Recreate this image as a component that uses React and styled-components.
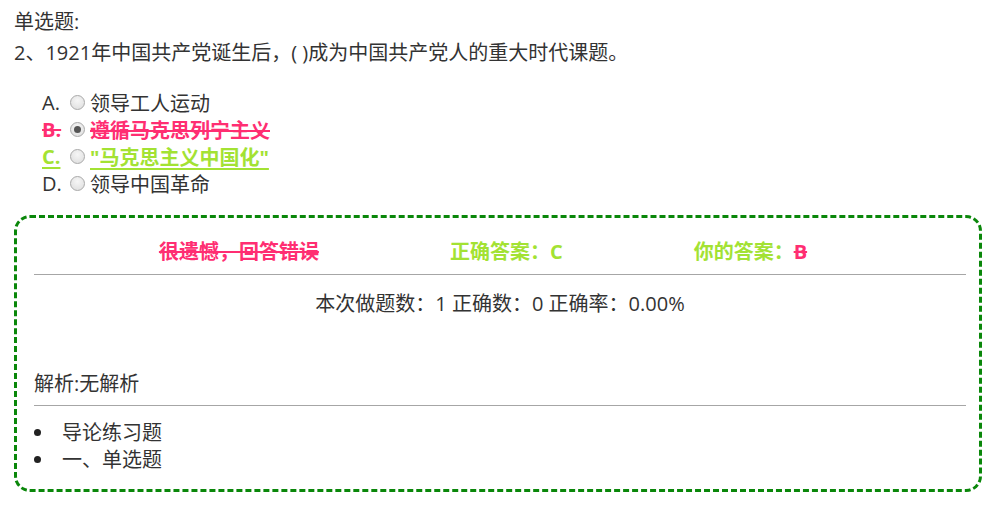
import styled, { createGlobalStyle } from "styled-components"

const GlobalStyle = createGlobalStyle`
  html, body {
    margin: 0;
    padding: 0;
    background: #fff;
  }
  body {
    font-family: "Open Sans", "Noto Sans CJK SC", sans-serif;
    font-size: 20px;
    color: #333;
  }
`

const Page = styled.div`
  padding: 8px 17px 0 14px;
`

const Line = styled.div`
  line-height: 27px;
  margin-top: ${(p) => p.$top || 0}px;
`

const Options = styled.div`
  margin: 23px 0 0 28px;
`

const Option = styled.div`
  display: flex;
  align-items: center;
  height: 27px;
  color: ${(p) => (p.$state === "wrong" ? "#ff2e72" : p.$state === "right" ? "#a3e233" : "#333")};
  font-weight: ${(p) => (p.$state ? 700 : 400)};
`

const Mark = styled.span`
  width: 21px;
  text-decoration: ${(p) => (p.$state === "wrong" ? "line-through" : p.$state === "right" ? "underline" : "none")};
  text-decoration-thickness: 2px;
  text-underline-offset: 3px;
  white-space: pre;
`

const Radio = styled.span`
  box-sizing: border-box;
  width: 15px;
  height: 15px;
  border-radius: 50%;
  border: 1px solid #a9a9a9;
  background: radial-gradient(circle at 50% 35%, #f6f6f6 0%, #dcdcdc 100%);
  margin: 0 5px 0 7px;
  display: flex;
  align-items: center;
  justify-content: center;
  &::after {
    content: "";
    width: 7px;
    height: 7px;
    border-radius: 50%;
    background: #555;
    display: ${(p) => (p.$checked ? "block" : "none")};
  }
`

const OptionText = styled.span`
  text-decoration: ${(p) => (p.$state === "wrong" ? "line-through" : p.$state === "right" ? "underline" : "none")};
  text-decoration-thickness: 2px;
  text-underline-offset: 3px;
`

const ResultBox = styled.div`
  margin-top: 18px;
  border: 3px dashed #0a870a;
  border-radius: 16px;
  padding: 20px 13px 16px 17px;
`

const Verdict = styled.div`
  display: flex;
  justify-content: center;
  gap: 131px;
  padding-right: 34px;
  line-height: 27px;
  font-weight: 700;
`

const Tag = styled.span`
  color: ${(p) => p.$color};
  text-decoration: ${(p) => (p.$strike ? "line-through" : "none")};
  text-decoration-thickness: 2px;
`

const Rule = styled.div`
  border-top: 1px solid #a6a6a6;
  margin: ${(p) => p.$m};
`

const Stats = styled.div`
  text-align: center;
  line-height: 27px;
`

const Analysis = styled.div`
  margin-top: 53px;
  line-height: 27px;
`

const List = styled.ul`
  list-style: none;
  margin: 13px 0 0;
  padding: 0;
`

const Item = styled.li`
  display: flex;
  align-items: center;
  line-height: 27px;
  &::before {
    content: "";
    width: 7px;
    height: 7px;
    border-radius: 50%;
    background: #222;
    margin: 0 21px 0 0;
  }
`

const options = [
  { mark: "A.", text: "领导工人运动" },
  { mark: "B.", text: "遵循马克思列宁主义", state: "wrong", checked: true },
  { mark: "C.", text: "\"马克思主义中国化\"", state: "right" },
  { mark: "D.", text: "领导中国革命" },
]

function App() {
  return (
    <>
      <GlobalStyle />
      <Page>
        <Line>单选题:</Line>
        <Line $top={4}>2、1921年中国共产党诞生后，( )成为中国共产党人的重大时代课题。</Line>
        <Options>
          {options.map((o) => (
            <Option key={o.mark} $state={o.state}>
              <Mark $state={o.state}>{o.mark}</Mark>
              <Radio $checked={o.checked} />
              <OptionText $state={o.state}>{o.text}</OptionText>
            </Option>
          ))}
        </Options>
        <ResultBox>
          <Verdict>
            <Tag $color="#ff2e72" $strike>很遗憾，回答错误</Tag>
            <Tag $color="#a3e233">正确答案：C</Tag>
            <Tag $color="#a3e233">
              你的答案：<Tag $color="#ff2e72" $strike>B</Tag>
            </Tag>
          </Verdict>
          <Rule $m="9px 0 15px" />
          <Stats>本次做题数：1 正确数：0 正确率：0.00%</Stats>
          <Analysis>解析:无解析</Analysis>
          <Rule $m="8px 0 0" />
          <List>
            <Item>导论练习题</Item>
            <Item>一、单选题</Item>
          </List>
        </ResultBox>
      </Page>
    </>
  )
}

export default App
